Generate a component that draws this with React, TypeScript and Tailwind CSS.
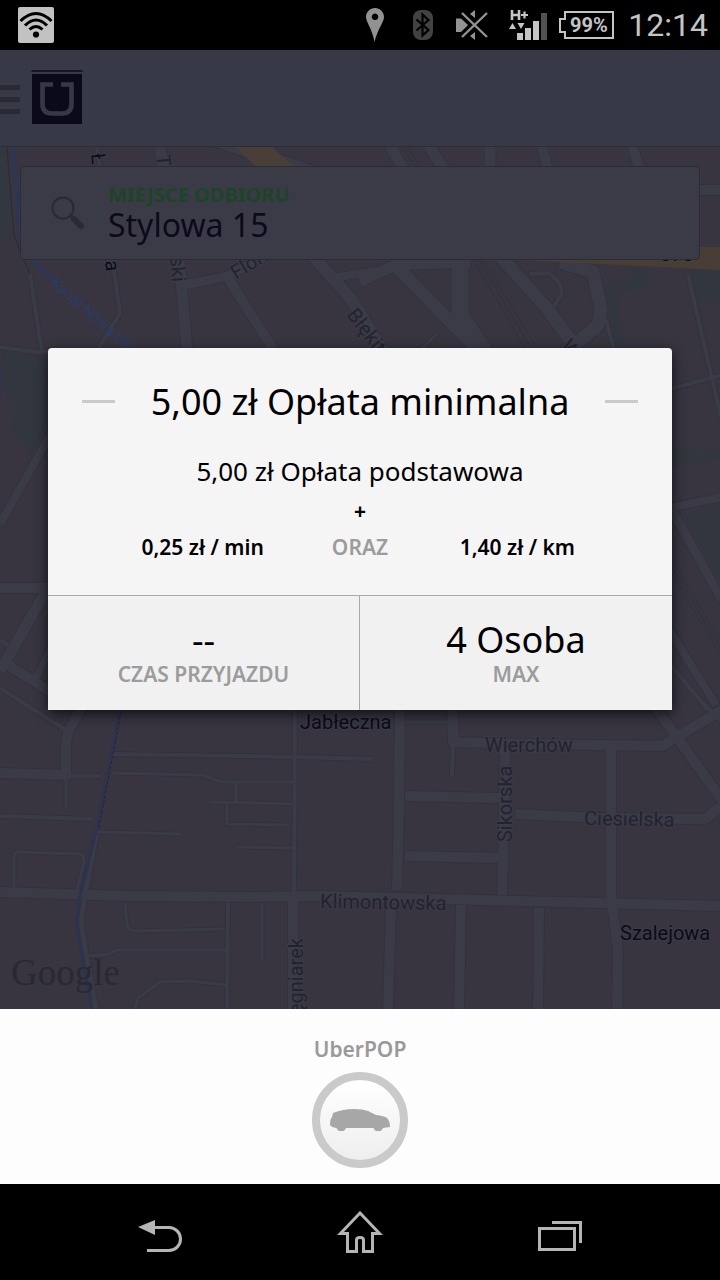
import React from 'react';

const UI = "font-['Noto_Sans','Open_Sans',sans-serif]";

type Road = { d: string; w: number };

const roads: Road[] = [
  { w: 11, d: 'M0 892 L130 896 L250 897 L320 896 L440 899 L600 903 L720 906' },
  { w: 11, d: 'M0 773 L70 775' },
  { w: 5, d: 'M68 776 H100' },
  { w: 11, d: 'M66 776 V745 Q66 738 70 728 L98 680' },
  { w: 5, d: 'M0 688 L20 701 L66 730' },
  { w: 4, d: 'M66 778 V808' },
  { w: 5, d: 'M0 816 L92 819' },
  { w: 4, d: 'M14 888 V856 Q14 852 18 852 L80 854 Q84 855 84 862 L77 890' },
  { w: 5, d: 'M112 754 L295 757 L373 759' },
  { w: 4, d: 'M112 773 L203 775 L221 782 H295' },
  { w: 4, d: 'M236 783 V801' },
  { w: 4, d: 'M210 802 L294 804' },
  { w: 4, d: 'M227 803 V824 L289 825' },
  { w: 4, d: 'M237 847 L294 848' },
  { w: 4, d: 'M98 832 L180 834' },
  { w: 5, d: 'M295 700 L294 893' },
  { w: 11, d: 'M293 900 V1009' },
  { w: 4, d: 'M262 903 V961' },
  { w: 5, d: 'M228 903 L227 1009' },
  { w: 4, d: 'M125 903 L127 924 Q128 931 135 931 L225 929' },
  { w: 4, d: 'M88 956 L110 954 L116 950 H226' },
  { w: 4, d: 'M135 1009 L138 998 L160 982 L190 981 L226 985' },
  { w: 6, d: 'M97 830 L86 890 L81 922 L87 960 L96 1009' },
  { w: 11, d: 'M400 700 L399 800 L397 890' },
  { w: 11, d: 'M391 905 L388 1009' },
  { w: 4, d: 'M405 722 H450' },
  { w: 11, d: 'M453 700 V742 L520 744 L662 746 L722 710' },
  { w: 5, d: 'M453 745 L452 776' },
  { w: 11, d: 'M505 745 L504 820 L502 895' },
  { w: 11, d: 'M405 796 L500 798' },
  { w: 11, d: 'M405 856 L498 858' },
  { w: 11, d: 'M515 814 L600 818 L705 819 L724 804' },
  { w: 11, d: 'M611 750 V895 L618 950 L617 1009' },
  { w: 11, d: 'M461 905 L459 1009' },
  { w: 11, d: 'M539 908 L538 1009' },
  { w: 11, d: 'M650 700 L722 800' },
  { w: 5, d: 'M698 698 L722 722' },
  { w: 9, d: 'M52 432 L0 524' },
  { w: 11, d: 'M0 588 H50' },
  { w: 12, d: 'M50 584 L0 671' },
  { w: 11, d: 'M8 665 L54 694' },
  { w: 8, d: 'M36 678 L54 642' },
  { w: 5, d: 'M0 640 L15 650' },
  { w: 5, d: 'M0 347 L43 353 L60 348' },
  { w: 5, d: 'M688 275 L712 378 L724 430' },
  { w: 5, d: 'M670 389 L722 375' },
  { w: 9, d: 'M670 508 L722 497' },
  { w: 10, d: 'M672 510 L722 600' },
  { w: 9, d: 'M668 628 L716 705' },
  { w: 5, d: 'M668 662 L708 710' },
  { w: 5, d: 'M30 274 L42 352' },
  { w: 5, d: 'M97 147 L113 265 L120 313 L98 350' },
  { w: 12, d: 'M160 147 L180 270 L187 350' },
  { w: 10, d: 'M184 285 L228 276 L300 238' },
  { w: 11, d: 'M228 278 L275 352' },
  { w: 13, d: 'M312 255 L352 300 L400 380' },
  { w: 9, d: 'M332 278 L395 268' },
  { w: 14, d: 'M215 140 L330 178' },
  { w: 12, d: 'M387 140 L405 172' },
  { w: 12, d: 'M424 140 L446 172' },
  { w: 12, d: 'M490 140 V170' },
  { w: 11, d: 'M540 140 L548 170' },
  { w: 11, d: 'M630 140 L640 170' },
  { w: 11, d: 'M700 190 H720' },
  { w: 12, d: 'M360 282 L395 265 L470 262' },
  { w: 14, d: 'M392 262 L480 352' },
  { w: 18, d: 'M460 258 V315 L486 354' },
  { w: 14, d: 'M500 256 L545 306 L578 350' },
  { w: 5, d: 'M530 274 L548 273 Q564 282 561 295 L554 306' },
  { w: 14, d: 'M560 262 L593 272 L601 310 L598 325 L575 345' },
  { w: 5, d: 'M606 320 L614 350' },
  { w: 4, d: 'M418 352 L438 333' },
];

function MapCanvas() {
  return (
    <svg
      className="absolute inset-0 h-full w-full"
      viewBox="0 147 720 862"
      preserveAspectRatio="xMidYMid slice"
      role="img"
      aria-label="Mapa"
      fontFamily="Roboto, sans-serif"
    >
      <rect x="0" y="147" width="720" height="862" fill="#383541" />
      <g fill="#32363e">
        <path d="M0 147 H6 L10 235 L0 238Z" fill="#31383f" />
        <path d="M3 352 L47 358 L48 425 L30 456 L12 430 L15 400 L3 390Z" />
        <path d="M605 284 L630 280 V268 H648 L650 288 L618 294 L625 350 L606 330Z" />
        <path d="M690 270 H720 V300 L697 304Z" />
        <path d="M684 514 L720 505 V580Z" />
        <path d="M672 448 L696 446 V452 L720 449 V459 L672 468Z" />
      </g>
      <g fill="none" strokeLinejoin="round">
        {roads.map((r) => (
          <path key={r.d} d={r.d} stroke="#32323e" strokeWidth={r.w + 1} />
        ))}
        {roads.map((r) => (
          <path key={r.d} d={r.d} stroke="#3b3b48" strokeWidth={r.w - 1} />
        ))}
      </g>
      <path d="M235 147 H272 L296 168 H258Z" fill="#493f38" />
      <path d="M520 260 L700 247 H720 V270 L640 266Z" fill="#493e35" />
      <g fill="none" stroke="#2f3548">
        <path d="M13 147 L20 235 L34 262 L54 280" stroke="#2d3655" strokeWidth="4" />
        <path d="M122 700 L97 828 L79 900 L77 925 L82 955 L92 1009" stroke="#2c3351" strokeWidth="3" />
        <path d="M7 147 L14 236 L30 274" stroke="#2a2a37" />
        <path d="M121 712 L99 828" stroke="#24232f" strokeDasharray="3 2" />
        <path d="M0 392 L15 391 L30 387 M0 243 L15 236 M0 400 L3 352" />
        <g stroke="#31313e">
          <path d="M472 258 L526 350 M478 258 L532 350 M484 262 L538 350" />
          <path d="M672 560 L720 640 M672 567 L720 647 M672 574 L720 654" />
          <path d="M402 147 L416 167 M408 147 L420 167" />
        </g>
      </g>
      <g fontSize="20" fill="#23222f" stroke="#3b3b48" strokeWidth="2" paintOrder="stroke">
        <text x="485" y="752">Wierchów</text>
        <text x="584" y="825" transform="rotate(1 584 825)">Ciesielska</text>
        <text x="320" y="908" transform="rotate(1 320 908)">Klimontowska</text>
        <text transform="translate(512 842) rotate(-90)">Sikorska</text>
        <text transform="translate(303 1047) rotate(-90)">Pielęgniarek</text>
        <text transform="translate(156 155) rotate(85)">T</text>
        <text transform="translate(170 257) rotate(85)">ski</text>
        <text transform="translate(236 280) rotate(-32)">Floriana</text>
        <text transform="translate(346 315) rotate(52)">Błękitna</text>
        <text transform="translate(560 346) rotate(52)">Wi</text>
        <g fill="#0b0a18">
          <text x="300" y="729">Jabłeczna</text>
          <text x="620" y="940">Szalejowa</text>
          <text transform="translate(91 154) rotate(84)">Ł</text>
          <text transform="translate(104 251) rotate(84)">ka</text>
          <text x="660" y="261" stroke="none">370</text>
        </g>
        <text transform="translate(50 284) rotate(41)" fontSize="15" fill="#2a3b66" stroke="none">
          Kanał Nowa Ulga
        </text>
      </g>
      <text x="11" y="985" fontSize="37" fontFamily="'Liberation Serif', serif" fill="#292834">
        Google
      </text>
    </svg>
  );
}

function StatusBar() {
  return (
    <div className="flex h-[50px] items-center justify-between bg-black pl-[18px] pr-3 font-[Roboto,sans-serif] text-[#c4c4c4]">
      <svg width="36" height="36" viewBox="0 0 36 36" aria-label="Wi-Fi">
        <rect width="36" height="36" rx="2" fill="#c2c2c2" />
        <g fill="none" stroke="#000" strokeWidth="3">
          <path d="M2.500 14 Q18 -1 33.500 14" />
          <path d="M7 18.500 Q18 7.500 29 18.500" />
          <path d="M11.500 22.500 Q18 16.500 24.500 22.500" />
        </g>
        <circle cx="18" cy="27.500" r="3.100" />
      </svg>
      <div className="flex items-center">
        <svg className="mr-[29px]" width="18" height="34" viewBox="0 0 18 34" aria-label="Lokalizacja">
          <path fillRule="evenodd" fill="#929292" d="M9 0 C4 0 0 4 0 9 C0 14 6 20 8.500 34 C12 20 18 14 18 9 C18 4 14 0 9 0Z M9 5.500 A3.300 3.300 0 1 1 8.990 5.500Z" />
        </svg>
        <svg className="mr-[23px]" width="20" height="30" viewBox="0 0 20 30" aria-label="Bluetooth">
          <rect width="20" height="30" rx="8" fill="#424242" />
          <path d="M3.500 9.500 L15.500 20 L9.500 25.500 V4.500 L15.500 10 L3.500 20.500" fill="none" stroke="#000" strokeWidth="2.200" />
        </svg>
        <svg className="mr-[21px]" width="32" height="30" viewBox="0 0 32 30" aria-label="Wyciszony">
          <path fill="#939393" d="M0 8.500 H5 L12 15 L5 22 H0Z M14 4 L19 0 V8Z M14 26 L19 22 V30Z" />
          <path d="M6 3 L31 27 M31 3 L6 27" stroke="#939393" strokeWidth="2.400" />
        </svg>
        <svg className="mr-3" width="38" height="32" viewBox="0 0 38 32" aria-label="Zasięg">
          <path d="M3 1 V11 M10 1 V11 M3 6 H10" stroke="#c4c4c4" strokeWidth="2.600" fill="none" />
          <path d="M12 6 H19 M15.500 2.500 V9.500" stroke="#c4c4c4" strokeWidth="2.200" />
          <path d="M0 20 L3.500 14 L7 20Z M8.500 14 H15.500 L12 20Z M8 24 H14 V31 H8Z M16 19 H22 V31 H16Z M24 12 H30 V31 H24Z" fill="#c4c4c4" />
          <path d="M32 4 H38 V31 H32Z" fill="#515151" />
        </svg>
        <div className="relative mr-[14px] flex h-7 w-[55px] items-center justify-center pl-[4px] text-[20px] font-bold leading-none">
          <svg className="absolute inset-0 h-full w-full" viewBox="0 0 55 28" aria-hidden="true">
            <path d="M6 1 H54 V27 H6 V21 H1 V8 H6Z" fill="none" stroke="#c4c4c4" strokeWidth="2" />
          </svg>
          <span className="relative">99%</span>
        </div>
        <time className="text-[32px] leading-none">12:14</time>
      </div>
    </div>
  );
}

function FareDialog() {
  const caption = 'text-[21px] leading-6 font-semibold text-[#9c9c9c]';
  return (
    <section
      role="dialog"
      aria-label="Cennik"
      className="w-full overflow-hidden rounded-t bg-[#f5f5f5] text-center text-black shadow-[0_4px_14px_rgba(0,0,0,0.7)]"
    >
      <div className="pt-[30px] pb-9">
        <div className="flex items-center justify-between px-[34px]">
          <span className="h-[3px] w-[33px] bg-[#cacaca]" />
          <h1 className="text-[36px] leading-[48px]">5,00 zł Opłata minimalna</h1>
          <span className="h-[3px] w-[33px] bg-[#cacaca]" />
        </div>
        <p className="mt-[29px] text-[26px] leading-8">5,00 zł Opłata podstawowa</p>
        <p className="mt-3 text-[21px] leading-6 font-bold">+</p>
        <div className="mt-3 grid grid-cols-3 px-[76px] text-[21px] leading-6 font-semibold">
          <span>0,25 zł / min</span>
          <span className="text-[#9c9c9c]">ORAZ</span>
          <span>1,40 zł / km</span>
        </div>
      </div>
      <div className="grid grid-cols-2 divide-x divide-[#a9a9a9] border-t border-[#a9a9a9] bg-[#f1f1f1]">
        <div className="py-6">
          <p className="text-[36px] leading-10">--</p>
          <p className={`mt-[2px] ${caption}`}>CZAS PRZYJAZDU</p>
        </div>
        <div className="py-6">
          <p className="text-[36px] leading-10">4 Osoba</p>
          <p className={`mt-[2px] ${caption}`}>MAX</p>
        </div>
      </div>
    </section>
  );
}

export default function App() {
  return (
    <div className={`flex min-h-screen flex-col bg-black ${UI}`}>
      <StatusBar />
      <main className="relative flex flex-1 flex-col">
        <header className="flex h-[97px] items-center border-b border-[#2c2d3a] bg-[#383946]">
          <button type="button" aria-label="Menu" className="flex h-[54px] items-center">
            <svg width="20" height="32" viewBox="0 0 20 32" aria-hidden="true">
              <path d="M0 3 H20 V8 H0Z M0 15 H20 V20 H0Z M0 27 H20 V32 H0Z" fill="#2a2a36" />
            </svg>
          </button>
          <svg className="ml-[11px]" width="52" height="56" viewBox="0 0 52 56" aria-label="Uber">
            <path d="M1 0 H51 L52 2 H0Z" fill="#171624" />
            <rect x="1" y="4" width="50" height="50" fill="#0b0a1b" />
            <path d="M22 14.500 H11.500 V34 Q11.500 43.500 21 43.500 H31 Q40.500 43.500 40.500 34 V14.500 H30" fill="none" stroke="#383845" strokeWidth="4.600" />
          </svg>
        </header>
        <div className="relative flex-1 overflow-hidden">
          <MapCanvas />
          <div className="relative px-5 pt-[19px]">
            <button
              type="button"
              className="flex h-[94px] w-full items-center rounded border border-[#2c2c39] bg-[#3b3b47] pl-[30px] text-left"
            >
              <svg className="mr-[23px] shrink-0" width="34" height="34" viewBox="0 0 34 34" aria-hidden="true">
                <circle cx="12" cy="12" r="10.500" fill="none" stroke="#2a2935" strokeWidth="2.200" />
                <path d="M19.500 19.500 L23 23" stroke="#2a2935" strokeWidth="3" />
                <path d="M23 23 L30 30" stroke="#2a2935" strokeWidth="6" strokeLinecap="round" />
              </svg>
              <span className="flex flex-col">
                <span className="text-[20px] leading-6 font-bold text-[#1b4526]">MIEJSCE ODBIORU</span>
                <span className="text-[32px] leading-9 text-[#0b0a19]">Stylowa 15</span>
              </span>
            </button>
          </div>
        </div>
        <div className="absolute inset-0 flex items-center px-12 pb-[2px]">
          <FareDialog />
        </div>
      </main>
      <footer className="flex h-[175px] flex-col items-center bg-[#fdfdfd] pt-7">
        <button type="button" className="flex flex-col items-center">
          <span className="text-[21px] leading-6 font-semibold text-[#9a9a9a]">UberPOP</span>
          <span className="mt-[11px] flex size-24 items-center justify-center rounded-full border-8 border-[#cacaca] bg-linear-to-b from-white to-[#eeeeee]">
            <svg width="60" height="22" viewBox="0 0 60 22" aria-hidden="true">
              <path
                d="M0 16 Q0 10 2 8 L3 4 Q13 0 24 0 Q33 0 38 2 L46 6 Q54 7 57 9 Q60 12 60 18 L53 19 A5 5 0 0 1 43.500 19 H16 A5 5 0 0 1 6.500 19 Q1 18 0 16Z"
                fill="#a7a7a7"
              />
            </svg>
          </span>
        </button>
      </footer>
      <nav className="grid h-24 grid-cols-3 items-center bg-black px-[60px]">
        <button type="button" aria-label="Wstecz" className="flex justify-center pt-2">
          <svg width="44" height="32" viewBox="0 0 44 32" fill="none" stroke="#b5b5b5" strokeWidth="3">
            <path d="M17 7.500 H31 A11.500 11.500 0 0 1 31 30.500 H9" />
            <path d="M0 7 L17 0 V15Z" fill="#b5b5b5" stroke="none" />
          </svg>
        </button>
        <button type="button" aria-label="Ekran główny" className="flex justify-center">
          <svg width="46" height="42" viewBox="0 0 46 42" fill="none" stroke="#b5b5b5" strokeWidth="3">
            <path d="M23 2 L3.500 22.500 H10.500 V40.500 H19.500 V29 Q19.500 26.500 23 26.500 Q26.500 26.500 26.500 29 V40.500 H35.500 V22.500 H42.500 Z" />
          </svg>
        </button>
        <button type="button" aria-label="Ostatnie aplikacje" className="flex justify-center pt-2">
          <svg width="44" height="30" viewBox="0 0 44 30" fill="none" stroke="#b5b5b5" strokeWidth="3">
            <path d="M1.500 7.500 H36.500 V28.500 H1.500Z M14 1.500 H42.500 V22" />
          </svg>
        </button>
      </nav>
    </div>
  );
}
